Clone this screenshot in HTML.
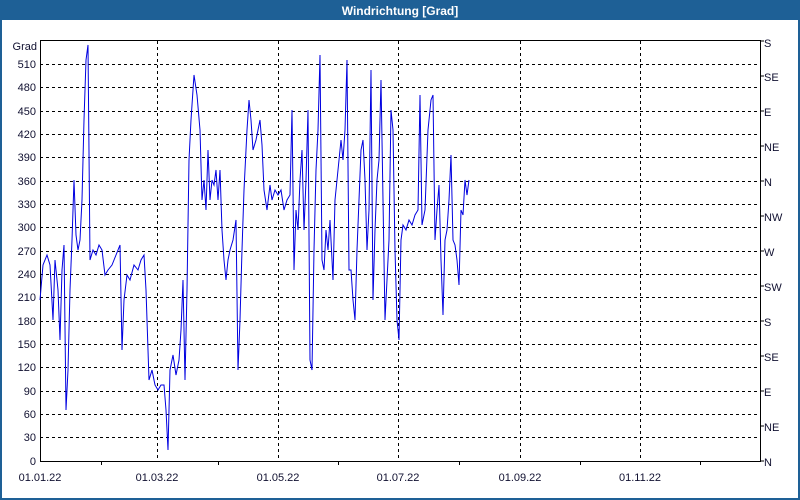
<!DOCTYPE html>
<html><head><meta charset="utf-8"><style>
body{margin:0;width:800px;height:500px;overflow:hidden;background:#fff;font-family:"Liberation Sans",sans-serif}
</style></head><body>
<svg width="800" height="500" xmlns="http://www.w3.org/2000/svg" style="display:block">
<rect x="0" y="0" width="800" height="500" fill="#1e6096"/>
<rect x="2" y="20" width="796" height="478" fill="#fff"/>
<text x="400" y="15" fill="#fff" font-size="12" font-weight="bold" text-anchor="middle" font-family="Liberation Sans, sans-serif">Windrichtung [Grad]</text>
<g stroke="#000" stroke-width="1" stroke-dasharray="3,3" fill="none">
<path d="M40 64.5H757M40 87.5H757M40 111.5H757M40 134.5H757M40 157.5H757M40 181.5H757M40 204.5H757M40 227.5H757M40 251.5H757M40 274.5H757M40 297.5H757M40 321.5H757M40 344.5H757M40 367.5H757M40 391.5H757M40 414.5H757M40 437.5H757"/>
<path d="M157.5 41V461M278.5 41V461M398.5 41V461M520.5 41V461M640.5 41V461"/>
</g>
<g stroke="#000" stroke-width="1" fill="none">
<path d="M40.5 40.5H760.5V461.5H40.5Z"/>
<path d="M101.5 461V465M218.5 461V465M338.5 461V465M459.5 461V465M580.5 461V465M700.5 461V465"/>
<path d="M760 41H764M760 76H764M760 111H764M760 146H764M760 181H764M760 216H764M760 251H764M760 286H764M760 321H764M760 356H764M760 391H764M760 426H764M760 461H764"/>
</g>
<g font-size="11" fill="#101030" text-anchor="end" font-family="Liberation Sans, sans-serif">
<text x="37" y="50">Grad</text>
<text x="36" y="68">510</text><text x="36" y="91">480</text><text x="36" y="115">450</text><text x="36" y="138">420</text><text x="36" y="161">390</text><text x="36" y="185">360</text><text x="36" y="208">330</text><text x="36" y="231">300</text><text x="36" y="255">270</text><text x="36" y="278">240</text><text x="36" y="301">210</text><text x="36" y="325">180</text><text x="36" y="348">150</text><text x="36" y="371">120</text><text x="36" y="395">90</text><text x="36" y="418">60</text><text x="36" y="441">30</text><text x="36" y="465">0</text>
</g>
<g font-size="11" fill="#101030" font-family="Liberation Sans, sans-serif">
<text x="764" y="47">S</text><text x="764" y="81">SE</text><text x="764" y="116">E</text><text x="764" y="151">NE</text><text x="764" y="186">N</text><text x="764" y="221">NW</text><text x="764" y="256">W</text><text x="764" y="291">SW</text><text x="764" y="326">S</text><text x="764" y="361">SE</text><text x="764" y="396">E</text><text x="764" y="431">NE</text><text x="764" y="466">N</text>
</g>
<g font-size="11" fill="#101030" text-anchor="middle" font-family="Liberation Sans, sans-serif">
<text x="40" y="481">01.01.22</text><text x="157" y="481">01.03.22</text><text x="278" y="481">01.05.22</text><text x="398" y="481">01.07.22</text><text x="520" y="481">01.09.22</text><text x="640" y="481">01.11.22</text>
</g>
<polyline fill="none" stroke="#0000e0" stroke-width="1" points="40,300 43,265 47,255 50,265 53,320 55,260 58,290 60,340 62,270 64,245 66,410 68,370 70,290 72,240 74,180 76,235 78,250 80,240 82,200 84,120 86,60 88,45 90,260 93,250 96,255 99,245 102,250 105,275 108,270 112,265 116,255 120,245 122,350 124,300 127,275 130,280 134,265 138,270 141,260 144,255 146,290 149,380 152,370 155,385 158,390 161,385 164,385 166,410 168,450 170,370 173,355 176,375 179,360 181,330 183,280 185,380 187,290 189,160 191,120 194,75 197,95 200,130 202,200 204,180 206,210 208,150 210,200 212,180 214,185 216,170 218,200 220,170 222,230 224,260 226,280 228,260 230,250 233,240 236,220 238,370 240,320 242,250 244,190 247,130 249,100 251,120 253,150 256,140 258,130 260,120 262,145 264,190 267,210 270,185 272,200 275,190 278,195 281,190 284,210 287,200 290,195 292,110 294,270 296,210 298,230 300,180 302,150 304,230 306,180 308,110 310,360 312,370 314,250 316,170 318,130 320,55 322,260 324,270 326,230 328,250 330,220 333,280 335,200 337,180 339,160 341,140 343,160 345,130 347,60 349,270 351,270 353,300 355,320 357,250 359,200 361,150 363,140 365,180 367,250 369,210 371,70 373,300 375,230 377,180 379,160 381,80 383,200 385,320 387,280 389,240 391,110 393,130 395,250 397,320 399,340 401,240 403,225 406,230 409,220 412,225 415,215 418,210 420,95 422,225 425,210 428,130 431,100 433,95 435,240 437,210 439,185 441,260 443,315 445,240 447,230 449,200 451,155 453,240 455,245 457,260 459,285 461,210 463,215 465,180 467,195 469,180"/>
</svg>
</body></html>
